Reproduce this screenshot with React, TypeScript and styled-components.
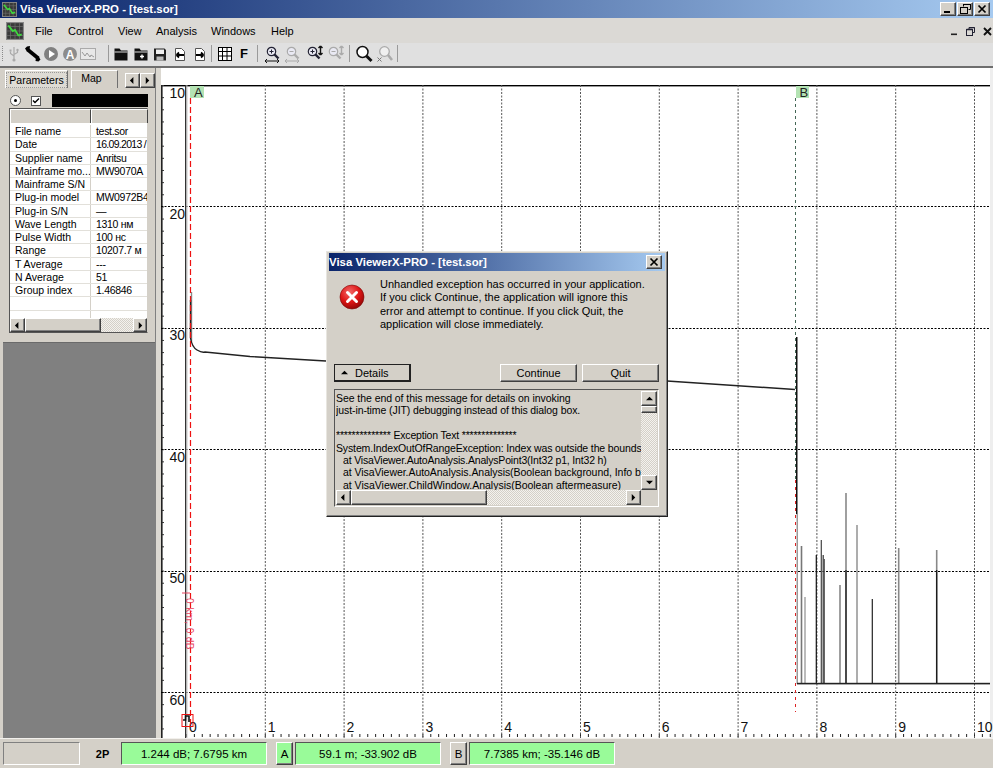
import React from "react";
import styled, { createGlobalStyle } from "styled-components";

const Global = createGlobalStyle`
  html, body { margin: 0; padding: 0; background: #d4d0c8; }
  * { box-sizing: border-box; }
  body { font-family: "Liberation Sans", Arial, sans-serif; color: #000; }
`;

const FACE = "#d4d0c8";
const raised = `
  border-top: 1px solid #fff;
  border-left: 1px solid #fff;
  border-right: 1px solid #404040;
  border-bottom: 1px solid #404040;
  box-shadow: inset -1px -1px 0 #808080;
`;
const sunken = `
  border-top: 1px solid #808080;
  border-left: 1px solid #808080;
  border-right: 1px solid #fff;
  border-bottom: 1px solid #fff;
`;

const Page = styled.div`
  position: relative;
  width: 993px;
  height: 768px;
  overflow: hidden;
  display: flex;
  flex-direction: column;
  background: ${FACE};
`;

const TitleBar = styled.div`
  height: 18px;
  flex: none;
  display: flex;
  align-items: center;
  padding: 0 3px 0 2px;
  gap: 3px;
  background: linear-gradient(90deg, #0a246a 0%, #a6caf0 100%);
  color: #fff;
  font-weight: bold;
  font-size: 11.4px;
  white-space: nowrap;
`;
const TitleText = styled.span`
  flex: 1;
`;
const WinButtons = styled.div`
  display: flex;
  gap: 1px;
`;
const WinButton = styled.div`
  width: 16px;
  height: 14px;
  background: ${FACE};
  ${raised}
  display: flex;
  align-items: center;
  justify-content: center;
`;

const MenuBar = styled.div`
  height: 25px;
  flex: none;
  display: flex;
  align-items: center;
  padding-left: 6px;
  background: #dbd9d5;
  font-size: 11px;
`;
const MenuIcon = styled.div`
  width: 18px;
  height: 18px;
  margin-right: 11px;
  display: flex;
`;
const MenuItem = styled.span<{ $w: number }>`
  width: ${(p) => p.$w}px;
  flex: none;
`;
const MdiButtons = styled.div`
  margin-left: auto;
  margin-right: 0;
  display: flex;
  align-items: center;
  gap: 8px;
  padding: 2px 1px 0 0;
`;

const ToolBar = styled.div`
  height: 25px;
  flex: none;
  display: flex;
  align-items: center;
  padding: 0 0 2px 5px;
  background: #e0e0e0;
  border-bottom: 2px solid #6e6e6e;
  position: relative;
`;
const Handle = styled.div`
  position: absolute;
  left: 2px;
  top: 3px;
  bottom: 5px;
  border-left: 1px dotted #8a8a8a;
`;
const Group = styled.div`
  display: flex;
  align-items: center;
  flex: none;
`;
const Tool = styled.div<{ $w: number }>`
  width: ${(p) => p.$w}px;
  height: 18px;
  display: flex;
  align-items: center;
  justify-content: center;
  font-size: 13px;
  font-weight: bold;
`;
const Sep = styled.div<{ $l: number; $r: number }>`
  width: 1px;
  height: 17px;
  background: #9a9a9a;
  margin: 0 ${(p) => p.$r}px 0 ${(p) => p.$l}px;
  flex: none;
`;

const Main = styled.div`
  flex: 1;
  min-height: 0;
  display: flex;
`;
const Side = styled.div`
  width: 155px;
  flex: none;
  padding-left: 3px;
  display: flex;
  flex-direction: column;
`;
const Splitter = styled.div`
  width: 6px;
  flex: none;
  background: #dbd8d1;
  border-left: 1px solid #808080;
`;
const ParamPanel = styled.div`
  height: 274px;
  flex: none;
  display: flex;
  flex-direction: column;
  font-size: 10.5px;
`;
const GrayArea = styled.div`
  flex: 1;
  background: #808080;
  border-top: 1px solid #6a6a6a;
`;
const TabRow = styled.div`
  height: 18px;
  flex: none;
  margin-top: 2px;
  display: flex;
  align-items: flex-end;
  padding-left: 2px;
  position: relative;
`;
const Tab = styled.div<{ $w: number; $active?: boolean }>`
  width: ${(p) => p.$w}px;
  height: 18px;
  margin-right: 3px;
  display: flex;
  align-items: center;
  justify-content: center;
  padding-right: ${(p) => (p.$active ? "0" : "6px")};
  border-top: 1px solid #fff;
  border-left: 1px solid #fff;
  border-right: 1px solid #707070;
  font-size: 10.5px;
  background: ${(p) => (p.$active ? "#dedbd4" : FACE)};
  span {
    ${(p) => (p.$active ? "outline: 1px dotted #999; padding: 1px 2px;" : "padding-bottom: 3px;")}
  }
`;
const TabArrows = styled.div`
  position: absolute;
  right: 0;
  top: 3px;
  display: flex;
`;
const ArrowBtn = styled.div<{ $w?: number; $h?: number }>`
  width: ${(p) => p.$w ?? 15}px;
  height: ${(p) => p.$h ?? 15}px;
  flex: none;
  background: ${FACE};
  ${raised}
  display: flex;
  align-items: center;
  justify-content: center;
`;
const SelectRow = styled.div`
  height: 20px;
  flex: none;
  padding: 6px 0 1px 7px;
  display: flex;
  align-items: center;
`;
const Radio = styled.div`
  width: 11px;
  height: 11px;
  flex: none;
  border-radius: 50%;
  border: 1px solid #555;
  background: #fff;
  display: flex;
  align-items: center;
  justify-content: center;
  margin-right: 10px;
  &::after {
    content: "";
    width: 3px;
    height: 3px;
    border-radius: 50%;
    background: #000;
  }
`;
const Check = styled.div`
  width: 10px;
  height: 10px;
  flex: none;
  border: 1px solid #555;
  background: #fff;
  display: flex;
  margin-right: 11px;
`;
const BlackBox = styled.div`
  width: 96px;
  height: 13px;
  flex: none;
  background: #000;
`;
const GridBox = styled.div`
  width: 139px;
  height: 225px;
  margin: 0 0 0 6px;
  flex: none;
  display: flex;
  flex-direction: column;
  background: #fff;
  border: 1px solid #555;
  border-right-color: #d4d0c8;
`;
const HeadRow = styled.div`
  height: 16px;
  flex: none;
  display: flex;
  background: ${FACE};
  border-bottom: 2px solid #fff;
`;
const HeadCell = styled.div<{ $w: number }>`
  width: ${(p) => p.$w}px;
  flex: none;
  border-right: 1px solid #444;
  border-top: 1px solid #fff;
  border-left: 1px solid #fff;
`;
const GridBody = styled.div`
  flex: 1;
  min-height: 0;
  overflow: hidden;
`;
const Row = styled.div`
  height: 13.25px;
  display: flex;
  align-items: center;
  border-bottom: 1px solid #e2e0da;
  white-space: nowrap;
`;
const NameCell = styled.div`
  width: 81px;
  flex: none;
  padding-left: 5px;
  overflow: hidden;
  border-right: 1px solid #d4d0c8;
  height: 100%;
  line-height: 12px;
`;
const ValueCell = styled.div<{ $tight?: boolean }>`
  flex: 1;
  padding-left: 5px;
  overflow: hidden;
  height: 100%;
  line-height: 12px;
  letter-spacing: ${(p) => (p.$tight ? "-0.7px" : "-0.3px")};
`;
const HBar = styled.div<{ $h?: number }>`
  height: ${(p) => p.$h ?? 14}px;
  flex: none;
  display: flex;
`;
const VBar = styled.div`
  width: 16px;
  flex: none;
  display: flex;
  flex-direction: column;
`;
const Thumb = styled.div<{ $w?: number; $h?: number }>`
  ${(p) => (p.$w ? `width: ${p.$w}px;` : "")}
  ${(p) => (p.$h ? `height: ${p.$h}px;` : "")}
  flex: none;
  background: ${FACE};
  ${raised}
`;
const Hatch = styled.div`
  flex: 1;
  background: repeating-conic-gradient(#d4d0c8 0 25%, #f4f2ee 0 50%) 0 0 / 2px 2px;
`;

const ChartArea = styled.div`
  flex: 1;
  min-width: 0;
  background: #fff;
  border-right: 3px solid #eeeeee;
`;
const ChartSvg = styled.svg`
  display: block;
  width: 832px;
  height: 670px;
  font-family: "Liberation Sans", Arial, sans-serif;
`;

const StatusBar = styled.div`
  height: 30px;
  flex: none;
  display: flex;
  align-items: flex-start;
  padding: 3px 0 0 3px;
  font-size: 11.5px;
  background: ${FACE};
  border-top: 1px solid #f2f0ec;
`;
const StatusField = styled.div`
  width: 77px;
  height: 23px;
  flex: none;
  ${sunken}
`;
const StatusLabel = styled.div`
  width: 41px;
  height: 23px;
  flex: none;
  display: flex;
  align-items: center;
  justify-content: center;
  padding-left: 4px;
  font-size: 11px;
  font-weight: bold;
`;
const Readout = styled.div<{ $mr: number }>`
  width: 146px;
  height: 23px;
  flex: none;
  margin-right: ${(p) => p.$mr}px;
  display: flex;
  align-items: center;
  justify-content: center;
  background: #99fb99;
  border-top: 1px solid #555;
  border-left: 1px solid #555;
  border-right: 1px solid #fff;
  border-bottom: 1px solid #fff;
  white-space: nowrap;
`;
const CursorBtn = styled.div<{ $green?: boolean; $w: number }>`
  width: ${(p) => p.$w}px;
  height: 23px;
  flex: none;
  margin-right: 2px;
  display: flex;
  align-items: center;
  justify-content: center;
  background: ${(p) => (p.$green ? "#99fb99" : FACE)};
  ${raised}
`;

const Dialog = styled.div`
  position: absolute;
  left: 326px;
  top: 251px;
  width: 342px;
  height: 266px;
  padding: 1px 2px 2px;
  display: flex;
  flex-direction: column;
  background: ${FACE};
  border-top: 1px solid #e8e6e0;
  border-left: 1px solid #e8e6e0;
  border-right: 1px solid #222;
  border-bottom: 1px solid #222;
  box-shadow: inset -1px -1px 0 #808080;
  font-size: 11px;
`;
const DialogTitle = styled.div`
  height: 18px;
  flex: none;
  display: flex;
  align-items: center;
  justify-content: space-between;
  padding: 0 3px 0 0;
  background: linear-gradient(90deg, #0a246a 0%, #a6caf0 100%);
  color: #fff;
  font-weight: bold;
  font-size: 11.4px;
  white-space: nowrap;
`;
const DialogTop = styled.div`
  height: 93px;
  flex: none;
  display: flex;
  padding: 7px 0 0 10px;
`;
const ErrorIcon = styled.div`
  width: 26px;
  height: 26px;
  flex: none;
  margin: 6px 15px 0 0;
  display: flex;
`;
const Message = styled.div`
  font-size: 11px;
  line-height: 13.3px;
  white-space: pre;
`;
const ButtonRow = styled.div`
  height: 18px;
  flex: none;
  display: flex;
  padding: 0 6px 0 5px;
`;
const DlgButton = styled.div<{ $strong?: boolean }>`
  width: 77px;
  height: 18px;
  flex: none;
  display: flex;
  align-items: center;
  justify-content: ${(p) => (p.$strong ? "flex-start" : "center")};
  gap: 7px;
  padding-left: ${(p) => (p.$strong ? "6px" : "0")};
  background: ${FACE};
  margin-left: ${(p) => (p.$strong ? "0" : "5px")};
  ${(p) =>
    p.$strong
      ? "border: 1px solid #222; border-right-width: 2px; border-bottom-width: 2px; outline-offset: 0;"
      : raised}
`;
const Spacer = styled.div`
  flex: 1;
`;
const DetailBox = styled.div`
  margin: 7px 6px 0 5px;
  height: 118px;
  flex: none;
  display: flex;
  flex-direction: column;
  border-top: 1px solid #555;
  border-left: 1px solid #555;
  border-right: 1px solid #fff;
  border-bottom: 1px solid #fff;
  padding: 1px;
`;
const DetailTop = styled.div`
  flex: 1;
  min-height: 0;
  display: flex;
`;
const DetailText = styled.div`
  flex: 1;
  min-width: 0;
  overflow: hidden;
  font-size: 10.5px;
  padding: 1px 0 0 0;
`;
const DetailLine = styled.div<{ $ls: number; $indent?: boolean }>`
  height: 12.4px;
  line-height: 12.4px;
  white-space: pre;
  letter-spacing: ${(p) => p.$ls}px;
  padding-left: ${(p) => (p.$indent ? "7px" : "0")};
`;
const Corner = styled.div`
  width: 16px;
  flex: none;
`;

const Tri = ({ d, s = 7 }: { d: "l" | "r" | "u" | "d"; s?: number }) => {
  const pts = { l: "5,0 5,8 1,4", r: "2,0 2,8 6,4", u: "0,6 8,6 4,2", d: "0,2 8,2 4,6" }[d];
  return (
    <svg width={s} height={s} viewBox="0 0 8 8">
      <polygon points={pts} fill="#000" />
    </svg>
  );
};

const AppIcon = ({ s }: { s: number }) => (
  <svg width={s} height={s} viewBox="0 0 16 16">
    <rect width="16" height="16" fill="#3a3a3a" />
    <rect x=".5" y=".5" width="15" height="15" fill="none" stroke="#888" />
    <path d="M4 1v14M8 1v14M12 1v14M1 4h14M1 8h14M1 12h14" stroke="#707070" strokeWidth=".6" />
    <path d="M2 3l4 5 2-1 3 5 3-1" fill="none" stroke="#3ed83e" strokeWidth="1.6" />
  </svg>
);

const G = ({ children }: { children: React.ReactNode }) => (
  <svg width="18" height="18" viewBox="0 0 18 18">
    {children}
  </svg>
);

const Mag = ({ c, plus, minus }: { c: string; plus?: boolean; minus?: boolean }) => (
  <>
    <circle cx="7.5" cy="6.5" r="4.2" fill="#eef" fillOpacity=".6" stroke={c} strokeWidth="1.2" />
    <path d="M10.5 9.5l4 4" stroke={c} strokeWidth="2.4" />
    {plus && <path d="M5.5 6.5h4M7.5 4.5v4" stroke={c} strokeWidth="1" />}
    {minus && <path d="M5.5 6.5h4" stroke={c} strokeWidth="1" />}
  </>
);

const HArrows = ({ c }: { c: string }) => (
  <path d="M1 16h14M1 16l2-2M1 16l2 2M15 16l-2-2M15 16l-2 2" stroke={c} fill="none" strokeWidth="1" />
);
const VArrows = ({ c }: { c: string }) => (
  <path d="M15.5 1v9M15.5 1l-2 2M15.5 1l2 2M15.5 10l-2-2M15.5 10l2-2" stroke={c} fill="none" strokeWidth="1.4" />
);

const Doc = ({ dir }: { dir: "l" | "r" }) => (
  <G>
    <path d="M4.5 3.5h6l3 3v9h-9z" fill="#fff" stroke="#555" />
    <path
      d={dir === "l" ? "M13 10H5.5M5.5 10l2.5-2.5M5.5 10l2.5 2.5" : "M5 10h7.5M12.5 10L10 7.5M12.5 10L10 12.5"}
      fill="none"
      stroke="#000"
      strokeWidth="1.8"
    />
  </G>
);

const rows: [string, string][] = [
  ["File name", "test.sor"],
  ["Date", "16.09.2013 /"],
  ["Supplier name", "Anritsu"],
  ["Mainframe mo...", "MW9070A"],
  ["Mainframe S/N", ""],
  ["Plug-in model", "MW0972B4"],
  ["Plug-in S/N", "—"],
  ["Wave Length", "1310 нм"],
  ["Pulse Width", "100 нс"],
  ["Range", "10207.7 м"],
  ["T Average", "---"],
  ["N Average", "51"],
  ["Group index", "1.46846"],
  ["", ""],
  ["", ""],
];

const detail: { t: string; ls: number; indent?: boolean }[] = [
  { t: "See the end of this message for details on invoking", ls: -0.06 },
  { t: "just-in-time (JIT) debugging instead of this dialog box.", ls: -0.09 },
  { t: " ", ls: 0 },
  { t: "************** Exception Text **************", ls: -0.18 },
  { t: "System.IndexOutOfRangeException: Index was outside the bounds", ls: -0.13 },
  { t: "at VisaViewer.AutoAnalysis.AnalysPoint3(Int32 p1, Int32 h)", ls: -0.18, indent: true },
  { t: "at VisaViewer.AutoAnalysis.Analysis(Boolean background, Info b", ls: -0.05, indent: true },
  { t: "at VisaViewer.ChildWindow.Analysis(Boolean aftermeasure)", ls: -0.02, indent: true },
];

const xAt = (i: number) => 186 + i * 78.8;
const yAt = (i: number) => 85 + i * 121.4;

const spikes: [number, number, string, number, number?][] = [
  [801.5, 546, "#777", 1.6],
  [805, 597, "#aaa", 1.6],
  [816.3, 555, "#111", 1.2],
  [821.3, 540, "#444", 1.2],
  [823.2, 555, "#333", 1.2],
  [824.3, 559, "#555", 1.2],
  [840, 585, "#888", 1.6],
  [846, 493, "#888", 1.6, 570],
  [857, 525, "#999", 1.6],
  [872.3, 599, "#222", 1.2],
  [898.7, 548, "#888", 1.6],
  [936.7, 550, "#888", 1.6, 570],
];

const Chart = () => {
  const leftTicks = Array.from({ length: 55 }, (_, i) => 85 + i * 12.14);
  const bottomTicks = Array.from({ length: 104 }, (_, i) => 186 + i * 7.88);
  return (
    <ChartSvg viewBox="161 68 832 670">
      <rect x="161" y="85" width="829" height="1.4" fill="#000" />
      <rect x="161" y="85" width="1.6" height="653" fill="#222" />
      {leftTicks.map((y) => (
        <rect key={y} x="162" y={y} width="2" height="1" fill="#333" />
      ))}
      {bottomTicks.map((x) => (
        <rect key={x} x={x} y="734" width="1" height="3" fill="#222" />
      ))}
      {[1, 2, 3, 4, 5, 6, 7, 8, 9, 10].map((i) => (
        <line key={i} x1={xAt(i) + 0.5} x2={xAt(i) + 0.5} y1="85" y2="738" stroke="#555" strokeDasharray="2 1.5" />
      ))}
      {[1, 2, 3, 4, 5].map((i) => (
        <line key={i} x1="161" x2="990" y1={Math.round(yAt(i)) + 0.5} y2={Math.round(yAt(i)) + 0.5} stroke="#000" strokeDasharray="2 1.5" />
      ))}
      <rect x="185" y="85" width="1.4" height="653" fill="#333" />
      <rect x="186.4" y="85" width="1" height="653" fill="#bbb" />
      {[0, 1, 2, 3, 4, 5].map((i) => (
        <text key={i} x="185" y={yAt(i) + 12.5} fontSize="14" textAnchor="end" fill="#111">
          {(i + 1) * 10}
        </text>
      ))}
      {[0, 1, 2, 3, 4, 5, 6, 7, 8, 9, 10].map((i) => (
        <text key={i} x={xAt(i) + 3} y="732" fontSize="14" fill="#111">
          {i}
        </text>
      ))}
      <rect x="190" y="86" width="14" height="12" fill="#b4e3b4" />
      <text x="194" y="97" fontSize="13" fill="#222">A</text>
      <rect x="796" y="86" width="13" height="12" fill="#b4e3b4" />
      <text x="799.5" y="97" fontSize="13" fill="#222">B</text>

      <path d="M191.5 292V342" stroke="#888" strokeWidth="1.4" fill="none" />
      <path
        d="M190.5 300V338Q192 347 197 350T205 352L250 356.5L326 361"
        stroke="#222"
        strokeWidth="1.4"
        fill="none"
      />
      <path d="M667 381L795 389.5" stroke="#222" strokeWidth="1.4" fill="none" />

      <line x1="795.5" x2="795.5" y1="98" y2="480" stroke="#446655" strokeDasharray="3 3" />
      <line x1="795.5" x2="795.5" y1="480" y2="712" stroke="#d22" strokeDasharray="3 4" />
      <rect x="796" y="337" width="1.5" height="177" fill="#111" />
      <rect x="796.5" y="514" width="1.5" height="170" fill="#999" />
      {spikes.map(([x, top, c, w, split]) => (
        <React.Fragment key={x}>
          <line x1={x} x2={x} y1={top} y2="684" stroke={c} strokeWidth={w} />
          {split && <line x1={x} x2={x} y1={split} y2="684" stroke="#111" strokeWidth="1.2" />}
        </React.Fragment>
      ))}
      <rect x="797" y="682.8" width="193" height="1.6" fill="#222" />

      <line x1="190.5" x2="190.5" y1="98" y2="725" stroke="#e11" strokeWidth="1.2" strokeDasharray="6 3" />
      <path d="M182 593H190" stroke="#e8455f" />
      <text transform="translate(185.5 598) rotate(90)" fontSize="10" fill="#e8455f" letterSpacing=".4">
        0 km, 0 dB
      </text>
      <rect x="182" y="714.5" width="11" height="12" fill="none" stroke="#e11" />
      <path d="M183 720H185.5V716H189V722" fill="none" stroke="#111" strokeWidth="1.6" />
    </ChartSvg>
  );
};

export default function App() {
  return (
    <Page>
      <Global />
      <TitleBar>
        <AppIcon s={15} />
        <TitleText>Visa ViewerX-PRO - [test.sor]</TitleText>
        <WinButtons>
          <WinButton>
            <svg width="10" height="10" viewBox="0 0 10 10"><rect x="1" y="7" width="6" height="2" fill="#000" /></svg>
          </WinButton>
          <WinButton>
            <svg width="11" height="10" viewBox="0 0 11 10">
              <path d="M3.5 2.5v-2h7v5h-2" fill="none" stroke="#000" />
              <rect x=".5" y="3.5" width="7" height="6" fill="none" stroke="#000" />
              <path d="M0 3.5h8M3 .5h8" stroke="#000" />
            </svg>
          </WinButton>
          <WinButton>
            <svg width="10" height="10" viewBox="0 0 10 10"><path d="M1.5 1.5l7 7M8.5 1.5l-7 7" stroke="#000" strokeWidth="1.7" /></svg>
          </WinButton>
        </WinButtons>
      </TitleBar>

      <MenuBar>
        <MenuIcon><AppIcon s={18} /></MenuIcon>
        <MenuItem $w={33}>File</MenuItem>
        <MenuItem $w={50}>Control</MenuItem>
        <MenuItem $w={38}>View</MenuItem>
        <MenuItem $w={55}>Analysis</MenuItem>
        <MenuItem $w={60}>Windows</MenuItem>
        <MenuItem $w={30}>Help</MenuItem>
        <MdiButtons>
          <svg width="8" height="8" viewBox="0 0 8 8"><rect x="1" y="5.5" width="6" height="1.6" fill="#222" /></svg>
          <svg width="9" height="9" viewBox="0 0 9 9">
            <path d="M3 2.5V.5h5.5v5H6.5" fill="none" stroke="#223" />
            <rect x=".5" y="2.5" width="6" height="6" fill="none" stroke="#223" />
            <path d="M3 .5h5.5M.5 2.5h6" stroke="#223" strokeWidth="1.4" />
          </svg>
          <svg width="9" height="9" viewBox="0 0 9 9"><path d="M1 1l7 7M8 1L1 8" stroke="#111" strokeWidth="1.9" /></svg>
        </MdiButtons>
      </MenuBar>

      <ToolBar>
        <Handle />
        <Group>
          <Tool $w={18.5}>
            <G>
              <path d="M9 2v13M9 11L5.5 8.5V6.5M9 9.5l3.5-2V6" fill="none" stroke="#aaa" strokeWidth="1.2" />
              <circle cx="9" cy="15" r="1.6" fill="#aaa" />
              <rect x="4.5" y="4.5" width="2" height="2" fill="#aaa" />
              <circle cx="12.5" cy="5" r="1.2" fill="#aaa" />
            </G>
          </Tool>
          <Tool $w={18.5}>
            <G>
              <path d="M3.5 4.5l11 9" stroke="#000" strokeWidth="3.6" />
              <path d="M1 3.5L3 1.5 6 1 5.5 5 3 6.5zM16.5 14.5l-2 2-3-.5.5-3.5 2.5-1z" fill="#000" />
            </G>
          </Tool>
          <Tool $w={18.5}>
            <G>
              <circle cx="9" cy="9" r="7" fill="#808080" />
              <polygon points="7,5 13,9 7,13" fill="#fff" />
            </G>
          </Tool>
          <Tool $w={18.5}>
            <G>
              <circle cx="9" cy="9" r="7" fill="#8c8c8c" />
              <text x="9" y="13.5" fontSize="12" fontWeight="bold" textAnchor="middle" fill="#fff" fontFamily="Liberation Sans">A</text>
            </G>
          </Tool>
          <Tool $w={18.5}>
            <G>
              <rect x="1.5" y="3.5" width="15" height="11" fill="#e8e8e8" stroke="#aaa" />
              <path d="M3 7l3 4 2-3 3 4 1-2 3 2" fill="none" stroke="#999" />
            </G>
          </Tool>
        </Group>
        <Sep $l={10} $r={3} />
        <Group>
          <Tool $w={19.6}>
            <G>
              <path d="M2.5 3.5h5l1.5 2h6.5v10h-13z" fill="#111" />
              <rect x="2.5" y="6.5" width="13" height="1" fill="#ddd" />
            </G>
          </Tool>
          <Tool $w={19.6}>
            <G>
              <path d="M2.5 3.5h5l1.5 2h6.5v10h-13z" fill="#111" />
              <rect x="2.5" y="6.5" width="13" height="1" fill="#ddd" />
              <path d="M10 9.5v4M8 11.5h4" stroke="#fff" strokeWidth="1.4" />
            </G>
          </Tool>
          <Tool $w={19.6}>
            <G>
              <path d="M3 3.5h10.5l1.5 1.5v10.5H3z" fill="#222" />
              <rect x="5" y="4.5" width="8" height="4.5" fill="#f0f0f0" />
              <rect x="5.5" y="11.5" width="7" height="4" fill="#bbb" />
            </G>
          </Tool>
          <Tool $w={19.6}><Doc dir="l" /></Tool>
          <Tool $w={19.6}><Doc dir="r" /></Tool>
        </Group>
        <Sep $l={2} $r={3} />
        <Group>
          <Tool $w={19}>
            <G>
              <rect x="2.5" y="2.5" width="13" height="13" fill="#fff" stroke="#000" />
              <path d="M6.5 3v13M11 3v13M3 6.5h13M3 11h13" stroke="#000" />
            </G>
          </Tool>
          <Tool $w={19}>F</Tool>
        </Group>
        <Sep $l={4} $r={4} />
        <Group>
          <Tool $w={20.6}><G><Mag c="#223" plus /><HArrows c="#111" /></G></Tool>
          <Tool $w={20.6}><G><Mag c="#aaa" minus /><HArrows c="#aaa" /></G></Tool>
          <Tool $w={20.6}><G><Mag c="#223" plus /><VArrows c="#111" /></G></Tool>
          <Tool $w={20.6}><G><Mag c="#aaa" minus /><VArrows c="#aaa" /></G></Tool>
        </Group>
        <Sep $l={4} $r={4} />
        <Group>
          <Tool $w={21}>
            <G>
              <circle cx="7.5" cy="7" r="5.5" fill="#fff" stroke="#111" strokeWidth="1.5" />
              <path d="M11.5 11l5 5" stroke="#111" strokeWidth="3" />
            </G>
          </Tool>
          <Tool $w={21}>
            <G>
              <circle cx="8.5" cy="6.5" r="4.8" fill="#f0f0f0" stroke="#aaa" strokeWidth="1.3" />
              <path d="M12 10l4 5" stroke="#aaa" strokeWidth="2.6" />
              <path d="M1.5 12.5l4 4M5.5 12.5l-4 4" stroke="#777" strokeWidth="1" />
            </G>
          </Tool>
        </Group>
        <Sep $l={1} $r={0} />
      </ToolBar>

      <Main>
        <Side>
          <ParamPanel>
            <TabRow>
              <Tab $w={63} $active><span>Parameters</span></Tab>
              <Tab $w={47}><span>Map</span></Tab>
              <TabArrows>
                <ArrowBtn><Tri d="l" /></ArrowBtn>
                <ArrowBtn><Tri d="r" /></ArrowBtn>
              </TabArrows>
            </TabRow>
            <SelectRow>
              <Radio />
              <Check>
                <svg width="8" height="8" viewBox="0 0 8 8"><path d="M1 3.5l2 2 4-4" fill="none" stroke="#000" strokeWidth="1.4" /></svg>
              </Check>
              <BlackBox />
            </SelectRow>
            <GridBox>
              <HeadRow>
                <HeadCell $w={81} />
                <HeadCell $w={57} />
              </HeadRow>
              <GridBody>
                {rows.map(([n, v], i) => (
                  <Row key={i}>
                    <NameCell>{n}</NameCell>
                    <ValueCell $tight={n === "Date"}>{v}</ValueCell>
                  </Row>
                ))}
              </GridBody>
              <HBar>
                <ArrowBtn $w={15} $h={14}><Tri d="l" /></ArrowBtn>
                <Thumb $w={76} />
                <Hatch />
                <ArrowBtn $w={14} $h={14}><Tri d="r" /></ArrowBtn>
              </HBar>
            </GridBox>
          </ParamPanel>
          <GrayArea />
        </Side>
        <Splitter />
        <ChartArea>
          <Chart />
        </ChartArea>
      </Main>

      <StatusBar>
        <StatusField />
        <StatusLabel>2P</StatusLabel>
        <Readout $mr={9}>1.244 dB; 7.6795 km</Readout>
        <CursorBtn $green $w={17}>A</CursorBtn>
        <Readout $mr={9}>59.1 m; -33.902 dB</Readout>
        <CursorBtn $w={17}>B</CursorBtn>
        <Readout $mr={0}>7.7385 km; -35.146 dB</Readout>
      </StatusBar>

      <Dialog>
        <DialogTitle>
          Visa ViewerX-PRO - [test.sor]
          <WinButton>
            <svg width="10" height="10" viewBox="0 0 10 10"><path d="M1.5 1.5l7 7M8.5 1.5l-7 7" stroke="#000" strokeWidth="1.7" /></svg>
          </WinButton>
        </DialogTitle>
        <DialogTop>
          <ErrorIcon>
            <svg width="26" height="26" viewBox="0 0 26 26">
              <defs>
                <radialGradient id="err" cx="40%" cy="30%" r="75%">
                  <stop offset="0%" stopColor="#f26a6a" />
                  <stop offset="55%" stopColor="#dd1515" />
                  <stop offset="100%" stopColor="#8c0505" />
                </radialGradient>
              </defs>
              <circle cx="13" cy="13" r="12" fill="url(#err)" stroke="#7a0a0a" strokeWidth=".6" />
              <path d="M8.5 8.5l9 9M17.5 8.5l-9 9" stroke="#fff" strokeWidth="3" strokeLinecap="round" />
            </svg>
          </ErrorIcon>
          <Message>{`Unhandled exception has occurred in your application.
If you click Continue, the application will ignore this
error and attempt to continue. If you click Quit, the
application will close immediately.`}</Message>
        </DialogTop>
        <ButtonRow>
          <DlgButton $strong>
            <Tri d="u" s={7} />
            Details
          </DlgButton>
          <Spacer />
          <DlgButton>Continue</DlgButton>
          <DlgButton>Quit</DlgButton>
        </ButtonRow>
        <DetailBox>
          <DetailTop>
            <DetailText>
              {detail.map((l, i) => (
                <DetailLine key={i} $ls={l.ls} $indent={l.indent}>{l.t}</DetailLine>
              ))}
            </DetailText>
            <VBar>
              <ArrowBtn $w={16} $h={15}><Tri d="u" /></ArrowBtn>
              <Thumb $h={7} />
              <Hatch />
              <ArrowBtn $w={16} $h={15}><Tri d="d" /></ArrowBtn>
            </VBar>
          </DetailTop>
          <HBar $h={15}>
            <ArrowBtn $w={15} $h={15}><Tri d="l" /></ArrowBtn>
            <Thumb $w={136} />
            <Hatch />
            <ArrowBtn $w={15} $h={15}><Tri d="r" /></ArrowBtn>
            <Corner />
          </HBar>
        </DetailBox>
      </Dialog>
    </Page>
  );
}
